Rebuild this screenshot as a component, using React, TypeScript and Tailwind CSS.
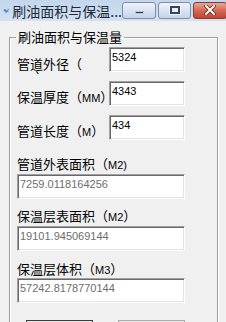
import React from 'react'

// ── Textbox (classic sunken edit) ─────────────────
function Box({ value, gray, className = '' }: { value: string; gray?: boolean; className?: string }) {
  return (
    <div
      className={`h-[25px] bg-white border border-t-[#a0a0a0] border-l-[#a0a0a0] border-b-white border-r-white shadow-[inset_1px_1px_0_#696969,inset_-1px_-1px_0_#e3e3e3] pl-[2px] pt-[3px] text-[11px] leading-[13px] font-['Liberation_Sans',sans-serif] whitespace-nowrap overflow-hidden ${gray ? 'text-[#6d6d6d]' : 'text-black'} ${className}`}
    >
      {value}
    </div>
  )
}

// Latin bits inside Chinese labels are narrower in the original
function Lat({ children }: { children: React.ReactNode }) {
  return <span className="text-[11px] font-['Liberation_Sans',sans-serif]">{children}</span>
}

function TitleBar() {
  return (
    <div className="h-[21px] flex items-center bg-gradient-to-b from-[#c4d6ec] to-[#d3e1f1] font-['Noto_Sans_CJK_SC',sans-serif]">
      <svg width="18" height="14" viewBox="0 0 18 14" className="ml-[3px] mt-[1px]">
        <path d="M1 4 L6 2 L9 5 L16 1 L12 7 L16 9 L10 9 L7 13 L6 8 L2 7 Z" fill="#3d7fd0" />
        <path d="M6 2 L9 5 L12 7 L7 6 Z" fill="#9cc6f2" />
      </svg>
      <span className="ml-[2px] text-[14px] leading-[16px] text-[#1e2a3a] whitespace-nowrap">刷油面积与保温...</span>
      <div className="ml-auto flex items-center gap-[2px] mt-[-1px] mr-[-1px]">
        <div className="w-[34px] h-[17px] rounded-[3px] border border-[#7d8ea5] bg-gradient-to-b from-[#eef3fa] via-[#d9e4f2] to-[#c3d3e8] flex items-end justify-center pb-[4px]">
          <div className="w-[9px] h-[3px] bg-[#2c3e55] border border-white/70" />
        </div>
        <div className="w-[33px] h-[17px] rounded-[3px] border border-[#7d8ea5] bg-gradient-to-b from-[#eef3fa] via-[#d9e4f2] to-[#c3d3e8] flex items-center justify-center">
          <div className="w-[10px] h-[8px] border-2 border-[#34465e] bg-[#e9eff7] outline outline-1 outline-white/60" />
        </div>
        <div className="w-[34px] h-[17px] rounded-[3px] border border-[#8a3a2e] bg-gradient-to-b from-[#e8a593] via-[#d26a55] to-[#c2432c] flex items-center justify-center">
          <svg width="12" height="10" viewBox="0 0 12 10">
            <path d="M2 1 L10 9 M10 1 L2 9" stroke="#5b1d14" strokeWidth="3.4" strokeLinecap="square" />
            <path d="M2 1 L10 9 M10 1 L2 9" stroke="#ffffff" strokeWidth="2" strokeLinecap="square" />
          </svg>
        </div>
      </div>
    </div>
  )
}

export default function App() {
  return (
    <div className="w-[226px] h-[322px] overflow-hidden bg-[#f0f0f0] font-['Liberation_Sans','Noto_Sans_CJK_SC',sans-serif] text-[13px] text-black">
      <TitleBar />

      <fieldset className="ml-[9px] mt-[9px] w-[209px] border border-[#a0a0a0] shadow-[inset_1px_1px_0_#fff,1px_1px_0_#fff]">
        <legend className="ml-[6px] px-[2px] leading-[14px] font-['Noto_Sans_CJK_SC',sans-serif]">刷油面积与保温量</legend>

        <div className="flex flex-col font-['Noto_Sans_CJK_SC',sans-serif]">
          {/* 输入参数 */}
          <div className="flex h-[25px] mt-[3px]">
            <div className="w-[99px] pl-[7px] mt-[10px] h-[17px] overflow-hidden leading-[13px]">
              管道外径（<br />
              <Lat>MM</Lat>）
            </div>
            <Box value="5324" className="w-[76px]" />
          </div>
          <div className="flex h-[25px] mt-[9px]">
            <div className="w-[99px] pl-[7px] mt-[9px] leading-[13px] whitespace-nowrap">
              保温厚度（<Lat>MM</Lat>）
            </div>
            <Box value="4343" className="w-[76px]" />
          </div>
          <div className="flex h-[25px] mt-[9px]">
            <div className="w-[99px] pl-[7px] mt-[9px] leading-[13px] whitespace-nowrap">
              管道长度（<Lat>M</Lat>）
            </div>
            <Box value="434" className="w-[76px]" />
          </div>

          {/* 计算结果 */}
          <div className="pl-[7px] mt-[17px] leading-[14px]">
            管道外表面积（<Lat>M2)</Lat>
          </div>
          <Box value="7259.0118164256" gray className="ml-[7px] mt-[2px] w-[168px]" />

          <div className="pl-[7px] mt-[10px] leading-[14px]">
            保温层表面积（<Lat>M2</Lat>）
          </div>
          <Box value="19101.945069144" gray className="ml-[7px] mt-[2px] w-[168px]" />

          <div className="pl-[7px] mt-[11px] leading-[14px]">
            保温层体积（<Lat>M3</Lat>）
          </div>
          <Box value="57242.8178770144" gray className="ml-[7px] mt-[1px] w-[168px]" />

          <div className="flex mt-[17px] pb-[4px]">
            <button className="ml-[16px] w-[67px] h-[23px] border border-[#3c3c3c] bg-[#e6e6e6] p-[3px]">
              <div className="h-full border border-dotted border-[#222]" />
            </button>
            <button className="ml-[25px] w-[67px] h-[23px] border border-[#acacac] bg-[#ebebeb]" />
          </div>
        </div>
      </fieldset>
    </div>
  )
}
